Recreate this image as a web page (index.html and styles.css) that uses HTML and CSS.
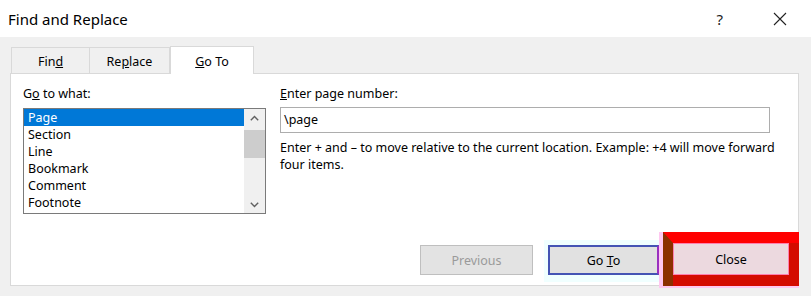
FILE: index.html
```html
<!DOCTYPE html>
<html>
<head>
<meta charset="utf-8">
<link rel="stylesheet" href="styles.css">
</head>
<body>
<div class="dialog">
  <div class="titlebar">
    <div class="title">Find and Replace</div>
    <div class="title-actions">
      <span class="help">?</span>
      <svg class="close-x" width="14" height="14" viewBox="0 0 14 14"><path d="M1 1 L13 13 M13 1 L1 13" stroke="#222" stroke-width="1.1" fill="none"/></svg>
    </div>
  </div>
  <div class="client">
    <div class="tabs">
      <div class="tab tab-find"><span>Fin<u>d</u></span></div>
      <div class="tab tab-replace"><span>Re<u>p</u>lace</span></div>
      <div class="tab tab-active"><span><u>G</u>o To</span></div>
    </div>
    <div class="panel">
      <div class="columns">
        <div class="col-left">
          <div class="label">G<u>o</u> to what:</div>
          <div class="listbox">
            <ul class="items">
              <li class="sel">Page</li>
              <li>Section</li>
              <li>Line</li>
              <li>Bookmark</li>
              <li>Comment</li>
              <li>Footnote</li>
            </ul>
            <div class="scrollbar">
              <div class="sb-btn">
                <svg width="9" height="6" viewBox="0 0 9 6"><path d="M0.8 5.2 L4.5 1.5 L8.2 5.2" stroke="#606060" stroke-width="1.4" fill="none"/></svg>
              </div>
              <div class="sb-track"><div class="sb-thumb"></div></div>
              <div class="sb-btn">
                <svg width="9" height="6" viewBox="0 0 9 6"><path d="M0.8 0.8 L4.5 4.5 L8.2 0.8" stroke="#606060" stroke-width="1.4" fill="none"/></svg>
              </div>
            </div>
          </div>
        </div>
        <div class="col-right">
          <div class="label"><u>E</u>nter page number:</div>
          <div class="input">\page</div>
          <div class="desc">Enter + and – to move relative to the current location. Example: +4 will move forward four items.</div>
        </div>
      </div>
      <div class="buttons">
        <div class="btn btn-disabled"><span>Previous</span></div>
        <div class="goto-glow"><div class="btn btn-default"><span>Go <u>T</u>o</span></div></div>
        <div class="close-pink">
          <div class="close-frame">
            <div class="btn btn-close"><span>Close</span></div>
          </div>
        </div>
      </div>
    </div>
  </div>
</div>
</body>
</html>
```
FILE: styles.css
```css
* { box-sizing: border-box; }
html, body { margin: 0; padding: 0; }
body {
  width: 811px;
  height: 296px;
  overflow: hidden;
  background: #f0f0f0;
  font-family: "Noto Sans", "Open Sans", sans-serif;
  font-size: 12.5px;
  color: #000;
}
.dialog { width: 811px; height: 296px; display: flex; flex-direction: column; }
.titlebar {
  height: 37px;
  background: #fff;
  display: flex;
  align-items: center;
  justify-content: space-between;
  padding: 0 24px 0 8px;
}
.title { font-size: 15px; color: #000; }
.title-actions { display: flex; align-items: center; gap: 50px; }
.help { font-size: 15px; color: #222; }
.close-x { display: block; }

.client { flex: 1; padding: 9px 12px 10px 10px; display: flex; flex-direction: column; }
.tabs { display: flex; height: 27px; align-items: flex-end; padding-left: 1px; position: relative; z-index: 1; }
.tab {
  height: 26px;
  border: 1px solid #d9d9d9;
  border-bottom: none;
  background: #f0f0f0;
  display: flex;
  align-items: center;
  justify-content: center;
  padding-top: 1px;
}
.tab-find { width: 79px; }
.tab-replace { width: 80px; border-left: none; }
.tab-active {
  width: 84px;
  height: 28px;
  margin-bottom: -1px;
  background: #fff;
}
.panel {
  flex: 1;
  background: #fff;
  border: 1px solid #d9d9d9;
  display: flex;
  flex-direction: column;
  justify-content: space-between;
  padding: 12px 28px 0 12px;
}
.columns { display: flex; gap: 14px; }
.col-left { width: 243px; }
.col-right { flex: 1; }
.label { line-height: 16px; height: 16px; margin-bottom: 6px; }
.col-right .label { margin-bottom: 5px; }
.listbox {
  height: 106px;
  border: 1px solid #7a7a7a;
  display: flex;
}
.items { list-style: none; margin: 0; padding: 0; flex: 1; }
.items li { height: 17px; line-height: 17px; padding-left: 4px; }
.items li.sel { background: #0078d7; color: #fff; }
.scrollbar { width: 21px; background: #f0f0f0; display: flex; flex-direction: column; }
.sb-btn { height: 17px; display: flex; align-items: center; justify-content: center; }
.sb-track { flex: 1; padding-top: 4px; }
.sb-thumb { height: 28px; background: #cdcdcd; }
.input {
  height: 26px;
  border: 1px solid #adadad;
  line-height: 24px;
  padding-left: 3px;
}
.desc { margin-top: 6px; line-height: 17px; margin-right: -14px; }

.buttons {
  display: flex;
  justify-content: flex-end;
  align-items: flex-end;
  margin-right: -29px;
  margin-bottom: -1px;
}
.btn {
  width: 113px;
  height: 30px;
  border: 1px solid #adadad;
  background: #e1e1e1;
  display: flex;
  align-items: center;
  justify-content: center;
}
.btn-disabled { border-color: #bfbfbf; background: #e3e3e3; color: #9a9a9a; margin-bottom: 11px; margin-right: 11px; }
.goto-glow { background: #f0ffff; padding: 5px 0 7px 4px; margin-bottom: 4px; }
.btn-default { width: 111px; border: 2px solid #4454b4; border-right-color: #9a30c0; }
.close-pink { background: #ffc8f0; padding: 0 0 2px 4px; margin-bottom: -2px; }
.close-frame {
  width: 136px;
  height: 54px;
  background: #d40c00;
  border-top: 11px solid #ff0000;
  border-left: 10px solid #8b3000;
}
.btn-close {
  width: 116px;
  height: 32px;
  border: 1px solid #ff80b0;
  background: #ecd9df;
}
```
